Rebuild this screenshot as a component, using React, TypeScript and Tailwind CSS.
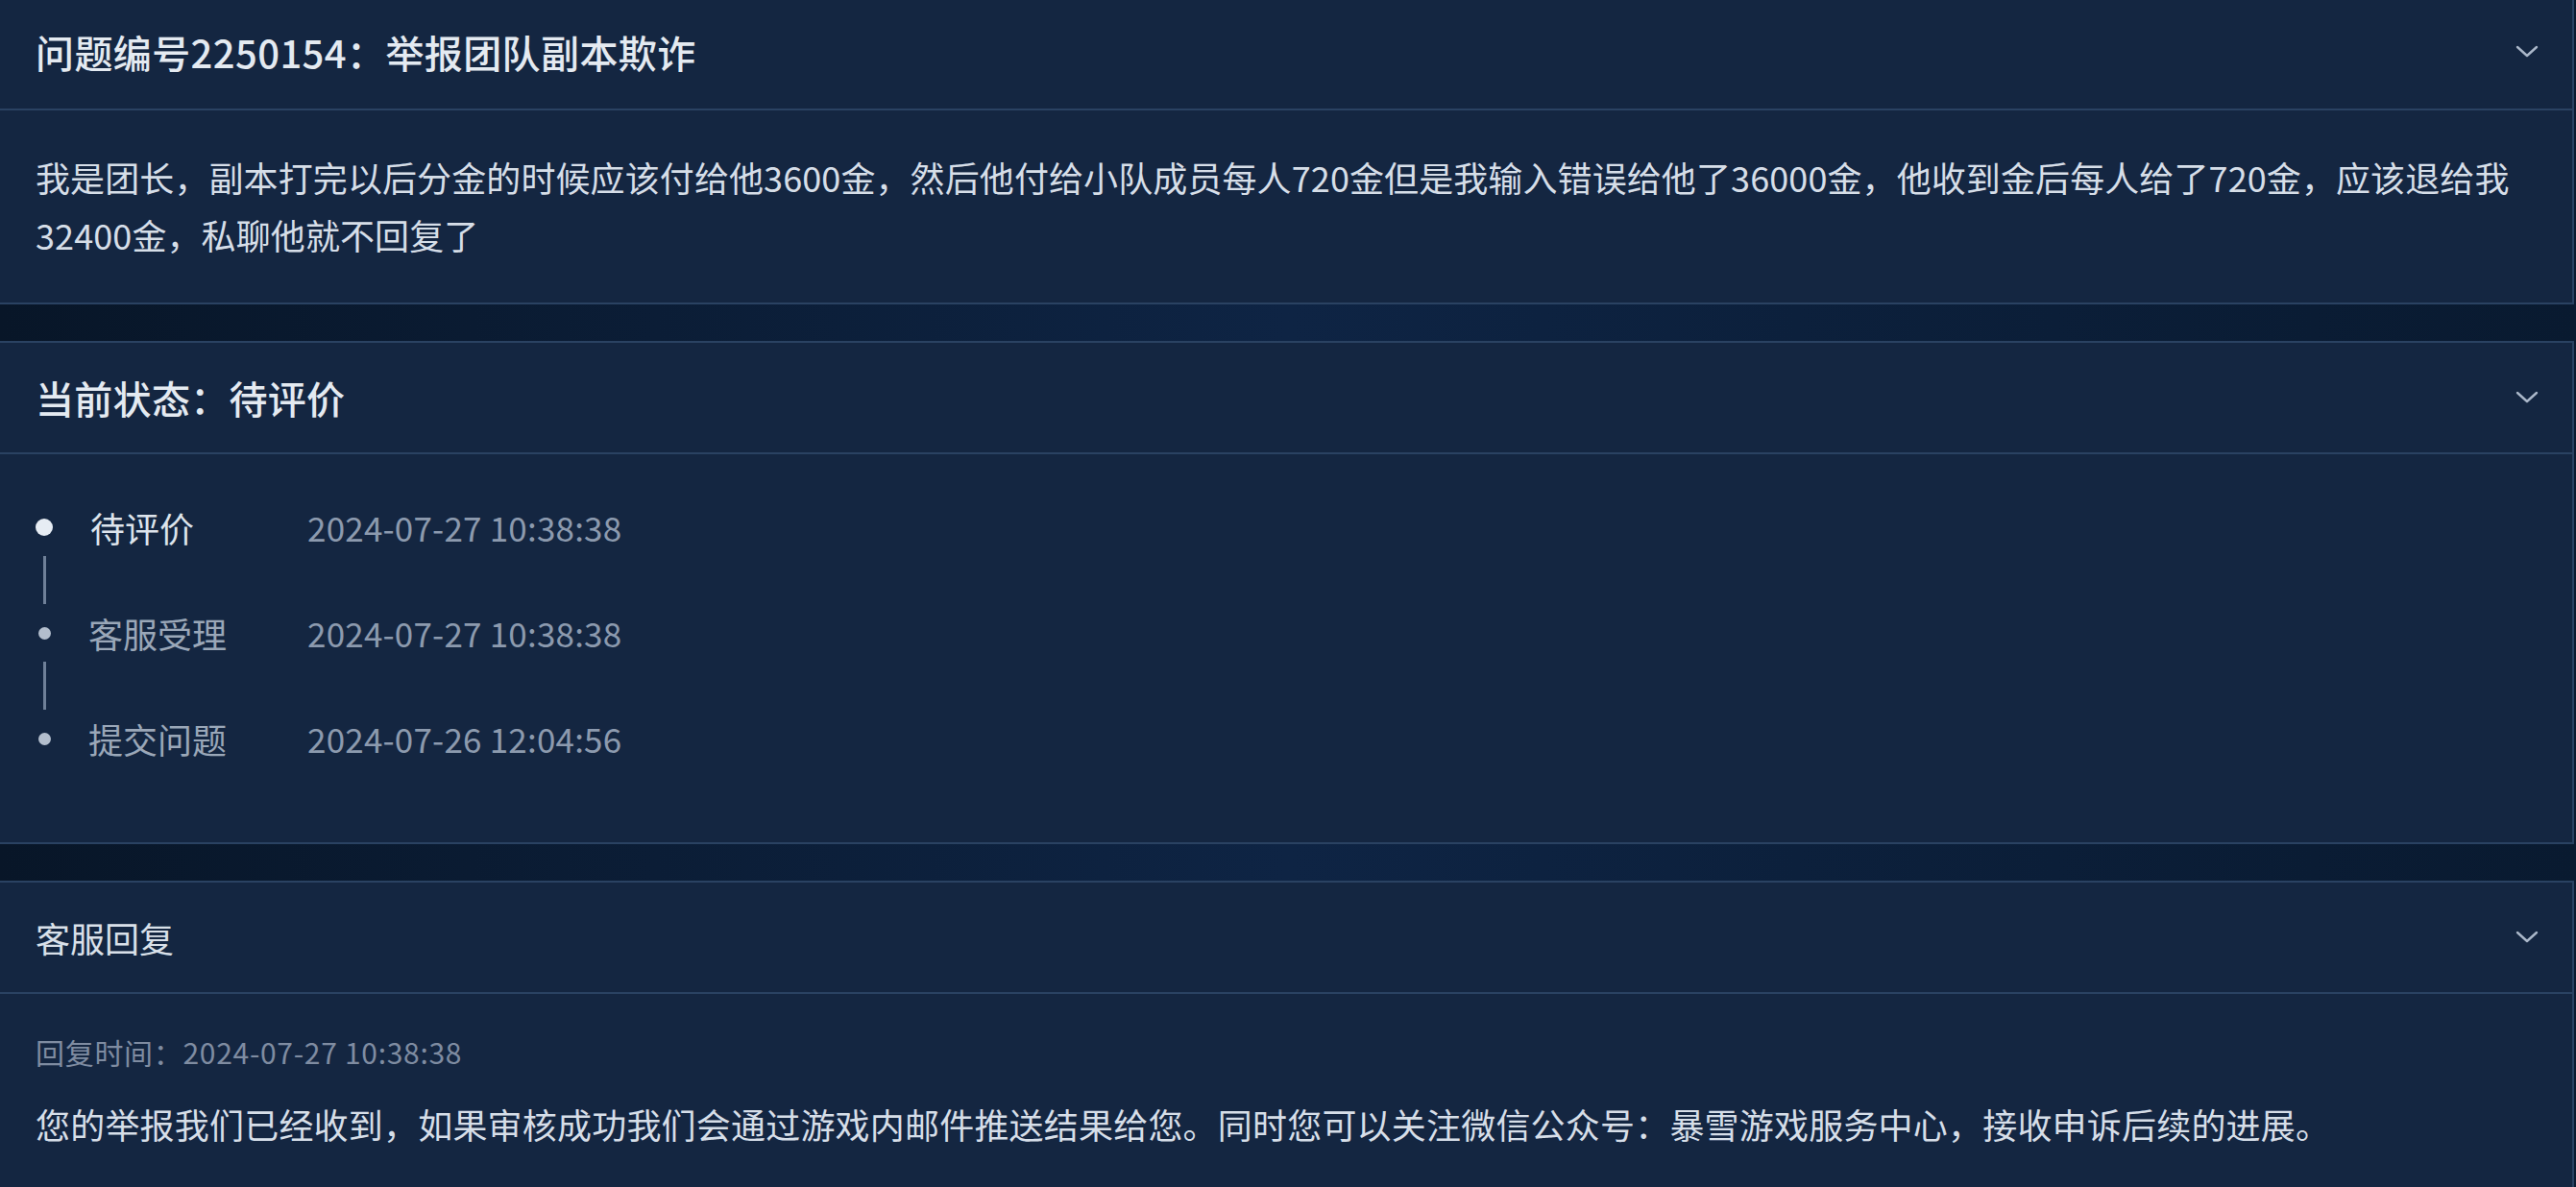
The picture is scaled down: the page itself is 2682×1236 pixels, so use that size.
const font = "font-['Noto_Sans_CJK_SC','Noto_Sans',sans-serif]";

function Chevron() {
  return (
    <svg width="26" height="16" viewBox="0 0 26 16" fill="none" className="shrink-0">
      <path d="M3 3 L13 12 L23 3" stroke="#aab7c9" strokeWidth="2.4" strokeLinecap="round" strokeLinejoin="round" />
    </svg>
  );
}

function Gap() {
  return <div className="h-[38px] bg-gradient-to-r from-[#081628] via-[#0e2444] to-[#091a30]" />;
}

function Header({ title, size }: { title: string; size: 'lg' | 'md' }) {
  return (
    <div className="flex items-center justify-between pl-[37px] pr-[34px] border-b-2 border-[#2a4262] h-[116px]">
      <span
        className={
          size === 'lg'
            ? 'text-[40px] font-medium text-[#e4eaf1] tracking-[0.3px]'
            : 'text-[36px] text-[#d9e0e9]'
        }
      >
        {title}
      </span>
      <Chevron />
    </div>
  );
}

const timeline = [
  { label: '待评价', time: '2024-07-27 10:38:38', active: true },
  { label: '客服受理', time: '2024-07-27 10:38:38', active: false },
  { label: '提交问题', time: '2024-07-26 12:04:56', active: false },
];

export default function App() {
  return (
    <div className={`${font} w-[2682px] h-[1236px] overflow-hidden bg-[#0a1a30]`}>
      {/* 问题描述 */}
      <section className="bg-[#142641] border-r-2 border-b-2 border-[#2a4262] mr-[2px]">
        <div className="flex items-center justify-between pl-[37px] pr-[34px] border-b-2 border-[#2a4262] h-[115px] pb-[6px]">
          <span className="text-[40px] font-medium text-[#e4eaf1] tracking-[0.4px]">
            问题编号2250154：举报团队副本欺诈
          </span>
          <Chevron />
        </div>
        <p className="pl-[37px] pr-[50px] pt-[39px] pb-[41px] text-[36px] leading-[60px] text-[#d6dee8] tracking-[0.1px]">
          我是团长，副本打完以后分金的时候应该付给他3600金，然后他付给小队成员每人720金但是我输入错误给他了36000金，他收到金后每人给了720金，应该退给我32400金，私聊他就不回复了
        </p>
      </section>

      <Gap />

      {/* 当前状态 */}
      <section className="bg-[#142641] border-t-2 border-r-2 border-b-2 border-[#2a4262] mr-[2px]">
        <Header title="当前状态：待评价" size="lg" />
        <div className="pl-[37px] pt-[51px] pb-[83px]">
          {timeline.map((item, i) => (
            <div key={item.label}>
              {i > 0 && (
                <div className="flex w-[18px] justify-center py-[5px]">
                  <div className="w-[3px] h-[50px] bg-[#6f8098]" />
                </div>
              )}
              <div className="flex items-center h-[50px]">
                <div className="flex w-[18px] justify-center">
                  <div
                    className={
                      item.active
                        ? 'w-[18px] h-[18px] rounded-full bg-[#e6ecf3]'
                        : 'w-[13px] h-[13px] rounded-full bg-[#b3becd]'
                    }
                  />
                </div>
                <span
                  className={`ml-[37px] w-[228px] text-[36px] ${
                    item.active ? 'text-[#dde4ec] pl-[2px]' : 'text-[#9aa7b8]'
                  }`}
                >
                  {item.label}
                </span>
                <span className="text-[35px] text-[#8c9aae] tracking-[0.2px]">{item.time}</span>
              </div>
            </div>
          ))}
        </div>
      </section>

      <Gap />

      {/* 客服回复 */}
      <section className="bg-[#142641] border-t-2 border-r-2 border-[#2a4262] mr-[2px] h-[400px]">
        <Header title="客服回复" size="md" />
        <div className="pl-[37px] pr-[50px] pt-[40px]">
          <p className="text-[30px] leading-[40px] text-[#7f8ca1] tracking-[0.7px]">回复时间：2024-07-27 10:38:38</p>
          <p className="mt-[30px] text-[36px] leading-[50px] text-[#d6dee8] tracking-[0.2px]">
            您的举报我们已经收到，如果审核成功我们会通过游戏内邮件推送结果给您。同时您可以关注微信公众号：暴雪游戏服务中心，接收申诉后续的进展。
          </p>
        </div>
      </section>
    </div>
  );
}
